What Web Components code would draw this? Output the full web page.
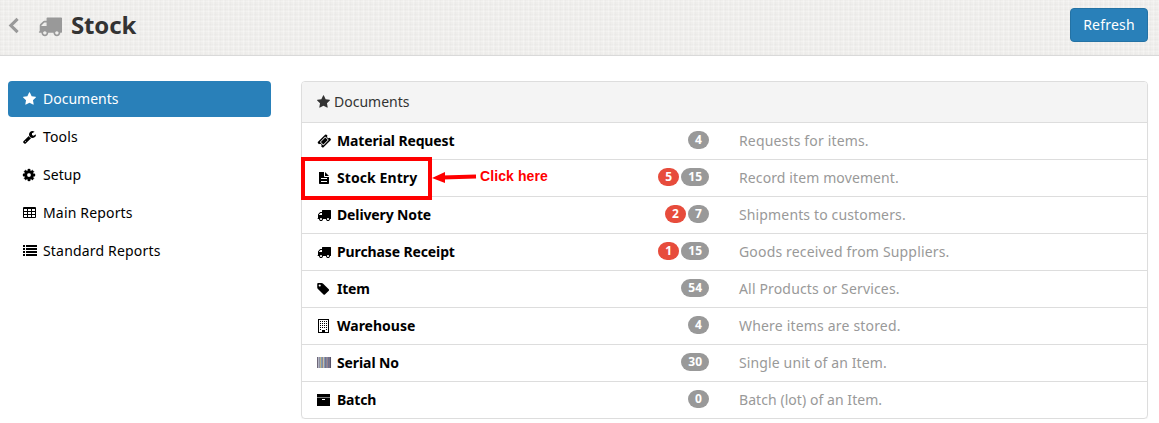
<!DOCTYPE html>
<html lang="en">
<head>
<meta charset="utf-8">
<title>Stock</title>
<style>
body{margin:0;background:#fff;font:14px/20px "Noto Sans","Open Sans",sans-serif;color:#000}
</style>
</head>
<body>
<stock-page></stock-page>
<script>
const ICONS = {
  truck:'<path d="M640 1408q0-52-38-90t-90-38-90 38-38 90 38 90 90 38 90-38 38-90zm-384-512h384v-256h-158q-13 0-22 9l-195 195q-9 9-9 22v30zm1280 512q0-52-38-90t-90-38-90 38-38 90 38 90 90 38 90-38 38-90zm256-1088v1024q0 15-4 26.5t-13.5 18.5-16.5 11.5-23.5 6-22.5 2-25.5 0-22.5-.5q0 106-75 181t-181 75-181-75-75-181h-384q0 106-75 181t-181 75-181-75-75-181h-64q-3 0-22.5.5t-25.5 0-22.5-2-23.5-6-16.5-11.5-13.5-18.5-4-26.5q0-26 19-45t45-19v-320q0-8-.5-35t0-38 2.5-34.5 6.5-37 14-30.5 22.5-30l198-198q19-19 50.5-32t58.5-13h160v-192q0-26 19-45t45-19h1024q26 0 45 19t19 45z"/>',
  star:'<path transform="translate(-64)" d="M1728 647q0 22-26 48l-363 354 86 500q1 7 1 20 0 21-10.5 35.5t-30.5 14.5q-19 0-40-12l-449-236-449 236q-22 12-40 12-21 0-31.5-14.5t-10.5-35.5q0-6 2-20l86-500-364-354q-25-27-25-48 0-37 56-46l502-73 225-455q19-41 49-41t49 41l225 455 502 73q56 9 56 46z"/>',
  wrench:'<path transform="translate(-64)" d="M448 1472q0-26-19-45t-45-19-45 19-19 45 19 45 45 19 45-19 19-45zm644-420l-682 682q-37 37-90 37-52 0-91-37l-106-108q-38-36-38-90 0-53 38-91l681-681q39 98 114.5 173.5t173.5 114.5zm634-435q0 39-23 106-47 134-164.5 217.5t-258.5 83.5q-185 0-316.5-131.5t-131.5-316.5 131.5-316.5 316.5-131.5q58 0 121.5 16.5t107.500 46.500q16 11 16 28t-16 28l-293 169v224l193 107q5-3 79-48.500t135.500-81 70.500-35.500q15 0 23.500 10t8.500 25z"/>',
  cog:'<path transform="translate(-128)" stroke="currentColor" stroke-width="40" d="M1152 896q0-106-75-181t-181-75-181 75-75 181 75 181 181 75 181-75 75-181zm512-109v222q0 12-8 23t-20 13l-185 28q-19 54-39 91 35 50 107 138 10 12 10 25t-9 23q-27 37-99 108t-94 71q-12 0-26-9l-138-108q-44 23-91 38-16 136-29 186-7 28-36 28h-222q-14 0-24.5-8.5t-11.5-21.5l-28-184q-49-16-90-37l-141 107q-10 9-25 9-14 0-25-11-126-114-165-168-7-10-7-23 0-12 8-23 15-21 51-66.5t54-70.5q-27-50-41-99l-183-27q-13-2-21-12.5t-8-23.5v-222q0-12 8-23t19-13l186-28q14-46 39-92-40-57-107-138-10-12-10-24 0-10 9-23 26-36 98.5-107.5t94.5-71.5q13 0 26 10l138 107q44-23 91-38 16-136 29-186 7-28 36-28h222q14 0 24.5 8.5t11.5 21.5l28 184q49 16 90 37l142-107q9-9 24-9 13 0 25 10 129 119 165 170 7 8 7 22 0 12-8 23-15 21-51 66.5t-54 70.5q26 50 41 98l183 28q13 2 21 12.5t8 23.5z"/>',
  table:'<path fill-rule="evenodd" transform="scale(128)" d="M1 1h11q1 0 1 1v9q0 1-1 1H1q-1 0-1-1V2q0-1 1-1zM1 3v2h3V3zM5 3v2h3V3zM9 3v2h3V3zM1 6v2h3V6zM5 6v2h3V6zM9 6v2h3V6zM1 9v2h3V9zM5 9v2h3V9zM9 9v2h3V9z"/>',
  list:'<path transform="scale(128)" d="M0 1h2v2H0zM3 1h11v2H3zM0 4h2v2H0zM3 4h11v2H3zM0 7h2v2H0zM3 7h11v2H3zM0 10h2v2H0zM3 10h11v2H3z"/>',
  ticket:'<path transform="translate(40)" d="M1024 452l316 316-572 572-316-316zm-211 979l618-618q19-19 19-45t-19-45l-362-362q-18-18-45-18t-45 18l-618 618q-19 19-19 45t19 45l362 362q18 18 45 18t45-18zm889-637l-907 908q-37 37-90.5 37t-90.5-37l-126-126q56-56 56-136t-56-136-136-56-136 56l-125-126q-37-37-37-90.5t37-90.5l907-906q37-37 90.5-37t90.5 37l125 125q-56 56-56 136t56 136 136 56 136-56l126 125q37 37 37 90.5t-37 90.5z"/>',
  file:'<path fill-rule="evenodd" transform="scale(128)" d="M2 1h5v4.300q0 .7.700.7H12v6.300q0 .7-.7.700H2.700q-.7 0-.7-.7zM8 1l4 4H8zM4 7v1h6V7zM4 10v1h6v-1z"/>',
  tag:'<path transform="translate(-100)" d="M576 448q0-53-37.500-90.500t-90.500-37.500-90.500 37.500-37.500 90.500 37.500 90.500 90.500 37.500 90.500-37.500 37.500-90.500zm1067 576q0 53-37 90l-491 492q-39 37-91 37-53 0-90-37l-715-716q-38-37-64.500-101t-26.500-117v-416q0-52 38-90t90-38h416q53 0 117 26.500t102 64.500l715 714q37 39 37 91z"/>',
  building:'<path fill-rule="evenodd" transform="scale(128)" d="M1 0h11v14H1zM2 1v12h3v-2h3v2h3V1zM3 2h1v1H3zM5 2h1v1H5zM7 2h1v1H7zM9 2h1v1H9zM3 4h1v1H3zM5 4h1v1H5zM7 4h1v1H7zM9 4h1v1H9zM3 6h1v1H3zM5 6h1v1H5zM7 6h1v1H7zM9 6h1v1H9zM3 8h1v1H3zM5 8h1v1H5zM7 8h1v1H7zM9 8h1v1H9zM3 10h1v1H3zM9 10h1v1H9z"/>',
  barcode:'<g transform="scale(128)">' + ['#6f6878','#b3b4c4','#8f93a2','#c2b184','#7f9dba','#8c8791','#c9bda6','#8199b6','#79718a','#8088a0','#9a8089','#6c7490','#7a7088','#55526a'].map((c,i)=>`<rect x="${i}" y="1" width="1.020" height="11" fill="${c}"/>`).join('') + '</g>',
  archive:'<path fill-rule="evenodd" transform="scale(128)" d="M0 1h13v3H0zM0 4.500h13V13H0zM5 6v1h3V6z"/>',
  chevron:'<path d="M1330 200L620 896l710 696" fill="none" stroke="currentColor" stroke-width="330"/>'
};

class UiIcon extends HTMLElement {
  connectedCallback() {
    const root = this.attachShadow({mode:'open'});
    root.innerHTML = `<style>:host{display:inline-flex;flex:none;width:14px;height:14px}svg{width:100%;height:100%;display:block;fill:currentColor;overflow:visible}</style><svg viewBox="0 0 1792 1792" aria-hidden="true">${ICONS[this.getAttribute('name')]}</svg>`;
  }
}
customElements.define('ui-icon', UiIcon);

function define(name, html) {
  const t = document.createElement('template');
  t.innerHTML = html;
  customElements.define(name, class extends HTMLElement {
    constructor() {
      super();
      this.attachShadow({mode:'open'}).append(t.content.cloneNode(true));
    }
  });
}

define('page-head', `<style>
:host{display:flex;align-items:center;box-sizing:border-box;height:56px;padding:0 11px 6px 5px;border-bottom:1px solid #d9d9d9;
background:repeating-linear-gradient(90deg,rgba(0,0,0,.01) 0 1px,transparent 1px 3px,rgba(255,255,255,.22) 3px 4px,transparent 4px 5px),repeating-linear-gradient(0deg,rgba(0,0,0,.01) 0 1px,transparent 1px 3px,rgba(255,255,255,.22) 3px 4px,transparent 4px 5px),#efeeec;color:#999}
.back{width:17px;height:17px;margin-top:2px}
.logo{width:24px;height:24px;margin:2px 0 0 16px}
h1{margin:0 0 0 9px;font-size:24px;line-height:30px;font-weight:700;color:#333;flex:1;letter-spacing:-.15px}
</style><ui-icon class="back" name="chevron"></ui-icon><ui-icon class="logo" name="truck"></ui-icon><h1><slot></slot></h1><slot name="action"></slot>`);

define('primary-button', `<style>
:host{display:block}
button{display:block;box-sizing:border-box;width:78px;height:34px;padding:0;font:inherit;letter-spacing:.2px;color:#fff;background:#2980b9;border:1px solid #2472a4;border-radius:4px}
</style><button type="button"><slot></slot></button>`);

define('nav-item', `<style>
:host{display:flex;align-items:center;gap:6px;height:36px;box-sizing:border-box;padding:0 15px;border-radius:4px}
:host([active]){background:#2980b9;color:#fff}
</style><slot name="icon"></slot><span><slot></slot></span>`);

define('side-nav', `<style>:host{display:flex;flex-direction:column;gap:2px;width:263px;flex:none}</style><slot></slot>`);

define('doc-panel', `<style>
:host{display:block;flex:1;border:1px solid #ddd;border-radius:4px;box-shadow:0 1px 1px rgba(0,0,0,.05)}
header{display:flex;align-items:center;gap:3px;height:40px;padding:0 15px;border-radius:3px 3px 0 0;background:#f4f4f4;color:#333}
</style><header><ui-icon name="star"></ui-icon><span><slot name="title"></slot></span></header><slot></slot>`);

define('count-badge', `<style>
:host{display:block;box-sizing:border-box;height:18px;min-width:21px;padding:0 7px;border-radius:9px;background:#999;color:#fff;font-size:12px;line-height:17px;font-weight:700;text-align:center}
:host([open]){background:#e74c3c}
</style><slot></slot>`);

define('doc-row', `<style>
:host{display:grid;grid-template-columns:392px 1fr;column-gap:30px;align-items:center;height:36px;padding-left:15px;border-top:1px solid #ddd;position:relative}
.main{display:flex;align-items:center}
b{margin-left:6px;flex:1;letter-spacing:var(--name-spacing,0)}
.counts{display:flex;gap:2px;margin-top:-2px}
.desc{color:#999;letter-spacing:var(--desc-spacing,0)}
</style><div class="main"><slot name="icon"></slot><b><slot></slot></b><div class="counts"><slot name="count"></slot></div></div><div class="desc"><slot name="desc"></slot></div><slot name="note"></slot>`);

define('click-note', `<style>
:host{position:absolute;z-index:2;left:-1px;top:-3px;display:flex;align-items:center}
.box{box-sizing:border-box;width:131px;height:43px;border:4px solid #f00}
svg{display:block;width:45px;height:16px;margin-top:-6px}
span{margin:-6px 0 0 3px;font:bold 14px/16px "Liberation Sans",Arial,sans-serif;letter-spacing:.1px;color:#f00;white-space:nowrap}
</style><div class="box"></div><svg viewBox="0 0 45 16" aria-hidden="true"><path d="M10 9.500L44 8.500" stroke="#f00" stroke-width="3.800"/><path d="M0 10L13 4v11z" fill="#f00"/></svg><span><slot></slot></span>`);

const nav = [['star','Documents',0],['wrench','Tools',.15],['cog','Setup',.05],['table','Main Reports',.17],['list','Standard Reports',.18]];
const docs = [
  ['ticket','Material Request',0,4,'Requests for items.',-.14,.16],
  ['file','Stock Entry',5,15,'Record item movement.',.08,.11],
  ['truck','Delivery Note',2,7,'Shipments to customers.',-.13,.14],
  ['truck','Purchase Receipt',1,15,'Goods received from Suppliers.',-.12,.17],
  ['tag','Item',0,54,'All Products or Services.',-.2,.16],
  ['building','Warehouse',0,4,'Where items are stored.',0,.18],
  ['barcode','Serial No',0,30,'Single unit of an Item.',-.1,.13],
  ['archive','Batch',0,0,'Batch (lot) of an Item.',-.2,.06]
];
customElements.define('stock-page', class extends HTMLElement {
  connectedCallback() {
    this.attachShadow({mode:'open'}).innerHTML = `<style>
:host{display:block}
main{display:flex;align-items:flex-start;gap:30px;padding:25px 11px 0 8px}
</style><page-head>Stock<primary-button slot="action">Refresh</primary-button></page-head>
<main><side-nav>${nav.map(([i,l,s],n)=>`<nav-item${n?'':' active'} style="letter-spacing:${s}px"><ui-icon slot="icon" name="${i}"></ui-icon>${l}</nav-item>`).join('')}</side-nav>
<doc-panel><span slot="title">Documents</span>${docs.map(([i,l,o,c,d,ns,ds],n)=>`<doc-row style="--name-spacing:${ns}px;--desc-spacing:${ds}px"><ui-icon slot="icon" name="${i}"></ui-icon>${l}${o?`<count-badge slot="count" open>${o}</count-badge>`:''}<count-badge slot="count">${c}</count-badge><span slot="desc">${d}</span>${n===1?'<click-note slot="note">Click here</click-note>':''}</doc-row>`).join('')}</doc-panel></main>`;
  }
});
</script>
</body>
</html>
